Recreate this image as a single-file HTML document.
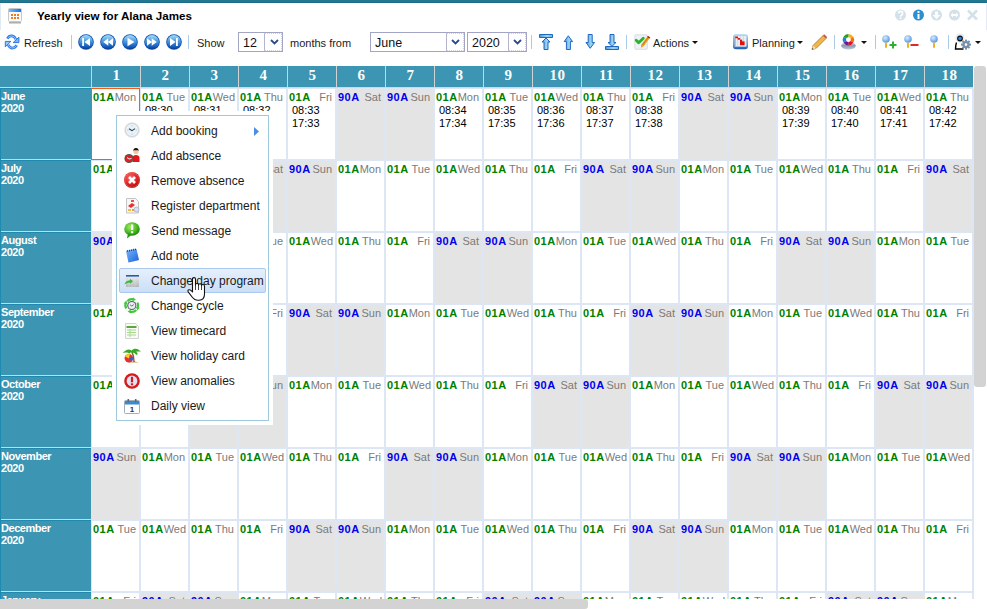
<!DOCTYPE html>
<html><head><meta charset="utf-8">
<style>
*{margin:0;padding:0;box-sizing:border-box}
html,body{width:987px;height:609px;overflow:hidden;background:#fff;font-family:"Liberation Sans",sans-serif;position:relative}
.abs{position:absolute}
#topbar{position:absolute;left:0;top:0;width:987px;height:3px;background:linear-gradient(#237790 0,#237790 2px,#1b6d8a 2px)}
#lline{position:absolute;left:0;top:3px;width:1px;height:27px;background:#dfeaf5}
#rline{position:absolute;left:986px;top:4px;width:1px;height:26px;background:#e4eaf7}
#title{position:absolute;left:37px;top:9px;font-weight:bold;font-size:11.6px;color:#000;white-space:nowrap}
.tb{position:absolute;font-size:11px;color:#1b1b1b;white-space:nowrap;top:36.6px}
.sep{position:absolute;top:35px;width:1px;height:14px;background:#a9cbea}
.sel-box{position:absolute;top:32px;height:20px;border:1px solid #a4a4c4;background:#fff;font-size:12.5px;color:#111}
.sel-box span{position:absolute;left:4px;top:2.5px}
.sel-box .dd{position:absolute;right:0;top:0;bottom:0;border-left:1px solid #b4b4cc;border-top:1px dotted #d0d0e4;border-right:1px dotted #d0d0e4;border-bottom:1px dotted #d0d0e4}
.caret{position:absolute;width:0;height:0;border-left:3px solid transparent;border-right:3px solid transparent;border-top:3.5px solid #111}
svg{position:absolute;overflow:visible}
/* grid */
#hdrrow{position:absolute;left:0;top:66px;width:973px;height:21px;background:#3c95b2}
.h{position:absolute;top:66px;width:49px;height:21px;border-left:1px solid #d2d2d2;color:#fff;font-family:"Liberation Serif",serif;font-weight:bold;font-size:15px;text-align:center;line-height:18px;letter-spacing:0.5px;text-indent:1px}
#hline{position:absolute;left:0;top:87px;width:973px;height:1px;background:#d6d6d6}
#leftcol{position:absolute;left:0;top:88px;width:91px;height:521px;background:#3c95b2;border-left:1px solid #1d8bb0}
.mon{position:absolute;left:1px;width:90px;height:72px;color:#fff;font-weight:bold;font-size:11px;line-height:12px;padding-top:2px;border-top:1px solid #cdd8dc;letter-spacing:-0.45px;box-shadow:inset 0 1px 0 #2089ad}
.c{position:absolute;width:49px;height:72px;border:1px solid #dde6f5;background:#fff;font-size:11px;line-height:13px;padding:2px 2px 0 1px;overflow:hidden}
.c.we{background:#e4e4e4}
.c.sel{border-color:#f75c14}
.l1{display:flex;justify-content:space-between;white-space:nowrap;padding-right:1px}
.c b{font-weight:bold;letter-spacing:0.5px}
.c b.g{color:#008000}
.c b.b{color:#0000f0}
.c i{font-style:normal;color:#7a7a7a}
.c .t{padding-left:3px;color:#000}
#overlay{position:absolute;left:112px;top:111px;width:161px;height:314px;background:#fff}
#menu{position:absolute;left:116px;top:115px;width:153px;height:306px;border:1px solid #9dcbdc;background:#fff}
.mi{position:absolute;left:34px;font-size:12px;color:#1a1a1a;white-space:nowrap}
#hl{position:absolute;left:2px;top:152px;width:147px;height:25px;border:1px solid #abc8ee;border-radius:2px;background:linear-gradient(#e6f0fc,#cadff7)}
#vscroll{position:absolute;left:974px;top:66px;width:12px;height:321px;background:#d3d3d3;border-radius:3px}
#hscroll{position:absolute;left:0;top:599px;width:588px;height:10px;background:#d3d3d3;border-radius:0 3px 3px 0}
#hwhite{position:absolute;left:0;top:599px;width:987px;height:10px;background:#fff}
</style></head><body>
<div id="topbar"></div><div id="lline"></div><div id="rline"></div>
<!-- title icon -->
<svg style="left:8px;top:8px" width="14" height="16" viewBox="0 0 14 16">
 <rect x="0.5" y="0.5" width="13" height="13" rx="1" fill="#fafafa" stroke="#c8c8c8"/>
 <defs><linearGradient id="tcg" x1="0" x2="1"><stop offset="0" stop-color="#6cc0fa"/><stop offset="1" stop-color="#1a6ef0"/></linearGradient></defs><rect x="1" y="1" width="12" height="3" fill="url(#tcg)"/>
 <g fill="#f07a1e"><rect x="3" y="6" width="2" height="2"/><rect x="6" y="6" width="2" height="2"/><rect x="9" y="6" width="2" height="2"/><rect x="3" y="9" width="2" height="2"/><rect x="6" y="9" width="2" height="2"/><rect x="9" y="9" width="2" height="2"/></g>
 <rect x="1" y="14" width="12" height="1.5" fill="#777" opacity=".6"/>
</svg>
<div id="title">Yearly view for Alana James</div>
<!-- window icons -->
<svg style="left:895px;top:9px" width="86" height="12" viewBox="0 0 86 12">
 <circle cx="5.5" cy="6" r="5.5" fill="#d3e1ea"/>
 <path d="M3.6 4.6Q3.6 2.4 5.6 2.4T7.6 4.4Q7.6 5.6 6.5 6.2T5.6 7.6" fill="none" stroke="#fff" stroke-width="1.6"/><rect x="4.8" y="8.4" width="1.7" height="1.6" fill="#fff"/>
 <circle cx="23.5" cy="6" r="5.5" fill="#2b8fd0"/>
 <rect x="22.5" y="5" width="2" height="5" fill="#fff"/><rect x="22.5" y="2" width="2" height="2" fill="#fff"/>
 <circle cx="41.5" cy="6" r="5.5" fill="#d3e1ea"/>
 <path d="M40 2.5h3v3.5h2.3l-3.8 4.2-3.8-4.2h2.3z" fill="#fff"/>
 <circle cx="59.5" cy="6" r="5.5" fill="#d3e1ea"/>
 <path d="M55.5 6l2.5-2.5v1.5h3v-1.5l2.5 2.5-2.5 2.5v-1.5h-3v1.5z" fill="#fff"/>
 <path d="M73 1.5l9 9M82 1.5l-9 9" stroke="#d3e1ea" stroke-width="2.6"/>
</svg>
<!-- toolbar -->
<svg style="left:5px;top:35px" width="14" height="14" viewBox="0 0 14 14">
 <path d="M2.3 3.6Q4 0.6 7 0.9Q9.5 1.2 10.8 4.2" fill="none" stroke="#2a78e0" stroke-width="2.6"/>
 <path d="M2.3 3.6Q4 0.6 7 0.9Q9.5 1.2 10.8 4.2" fill="none" stroke="#9ccaf8" stroke-width=".9"/>
 <path d="M13.9 2.2V7.6H8.2z" fill="#7ab8f4" stroke="#2a78e0" stroke-width="1" stroke-linejoin="round"/>
 <path d="M11.7 10.2Q10 13.3 7 13.1Q4.5 12.8 3.2 9.8" fill="none" stroke="#2a78e0" stroke-width="2.6"/>
 <path d="M11.7 10.2Q10 13.3 7 13.1Q4.5 12.8 3.2 9.8" fill="none" stroke="#9ccaf8" stroke-width=".9"/>
 <path d="M0.3 6.4V11.8L5.9 6.4z" fill="#9ccaf8" stroke="#2a78e0" stroke-width="1" stroke-linejoin="round"/>
</svg>
<div class="tb" style="left:24px">Refresh</div>
<div class="sep" style="left:71px"></div>
<svg style="left:78px;top:34px" width="106" height="16" viewBox="0 0 106 16">
 <defs>
  <linearGradient id="bg1" x1="0" y1="0" x2="0" y2="1"><stop offset="0" stop-color="#a4dcfa"/><stop offset=".45" stop-color="#4a9ae0"/><stop offset=".8" stop-color="#1a62c0"/><stop offset="1" stop-color="#0a3a90"/></linearGradient>
  <g id="nbb"><circle cx="8" cy="8" r="7.8" fill="#0d4aa8"/><circle cx="8" cy="8" r="7" fill="url(#bg1)"/></g>
 </defs>
 <g><use href="#nbb"/><rect x="4.2" y="4" width="1.8" height="8" fill="#fff"/><path d="M12 4v8l-5.5-4z" fill="#fff"/></g>
 <g transform="translate(22,0)"><use href="#nbb"/><path d="M8.3 4.2v7.6l-5-3.8zM13 4.2v7.6l-5-3.8z" fill="#fff"/></g>
 <g transform="translate(44,0)"><use href="#nbb"/><path d="M5.5 3.8v8.4l7-4.2z" fill="#fff"/></g>
 <g transform="translate(66,0)"><use href="#nbb"/><path d="M3 4.2v7.6l5-3.8zM7.7 4.2v7.6l5-3.8z" fill="#fff"/></g>
 <g transform="translate(88,0)"><use href="#nbb"/><path d="M4 4v8l5.5-4z" fill="#fff"/><rect x="10" y="4" width="1.8" height="8" fill="#fff"/></g>
</svg>
<div class="sep" style="left:188px"></div>
<div class="tb" style="left:197px">Show</div>
<div class="sel-box" style="left:238px;width:45px"><span>12</span><div class="dd" style="width:18px"></div></div>
<div class="tb" style="left:290px">months from</div>
<div class="sel-box" style="left:370px;width:95px"><span>June</span><div class="dd" style="width:18px"></div></div>
<div class="sel-box" style="left:467px;width:60px"><span>2020</span><div class="dd" style="width:18px"></div></div>
<svg style="left:270px;top:39px" width="280" height="6" viewBox="0 0 280 6">
 <path d="M1 1l3.5 3.5 3.5-3.5" fill="none" stroke="#2a4a8a" stroke-width="1.8"/>
 <path d="M182 1l3.5 3.5 3.5-3.5" fill="none" stroke="#2a4a8a" stroke-width="1.8"/>
 <path d="M244 1l3.5 3.5 3.5-3.5" fill="none" stroke="#2a4a8a" stroke-width="1.8"/>
</svg>
<div class="sep" style="left:531px"></div>
<svg style="left:538px;top:34px" width="84" height="16" viewBox="0 0 84 16">
 <defs><linearGradient id="ag" x1="0" x2="1"><stop offset="0" stop-color="#4f97d6"/><stop offset=".6" stop-color="#9fd6f2"/><stop offset="1" stop-color="#6cb0e0"/></linearGradient></defs>
 <g fill="url(#ag)" stroke="#1f68c2" stroke-width="1" stroke-linejoin="round">
 <rect x="1.5" y="0.5" width="13" height="3"/><path d="M8 4l4 4h-2v7.5h-4v-7.5h-2z"/>
 <path d="M30.3 1.8l4.3 5.8h-2.2v7.9h-4v-7.9h-2.2z"/>
 <path d="M52.2 14.3l4.3-5.8h-2.3v-8h-4v8h-2.2z"/>
 <path d="M74 12.3l4-3.8h-2v-8h-4v8h-2z"/><rect x="67.5" y="12.5" width="13" height="3"/>
 </g>
</svg>
<div class="sep" style="left:626px"></div>
<svg style="left:634px;top:34px" width="17" height="16" viewBox="0 0 17 16">
 <rect x="0.8" y="0.8" width="12.5" height="14.5" rx="1" fill="#eef2f6" stroke="#d2d6da" stroke-width=".8"/>
 <path d="M2.2 6.3L4.6 8.8 9.3 4.2" fill="none" stroke="#28b428" stroke-width="2.8" stroke-linecap="round" stroke-linejoin="round"/>
 <path d="M6.8 13.8L7.3 10.6 13 3 15.3 4.8 9.6 12.3z" fill="#eea020"/>
 <path d="M8.3 11.2L14 3.8" stroke="#c87010" stroke-width=".8"/>
 <path d="M13 3L14 1.7 16.3 3.5 15.3 4.8z" fill="#b0281a"/>
</svg>
<div class="tb" style="left:653px">Actions</div>
<div class="caret" style="left:692px;top:41px"></div>
<svg style="left:733px;top:34px" width="16" height="16" viewBox="0 0 16 16">
 <defs><linearGradient id="plg" x1="0" y1="0" x2="0" y2="1"><stop offset="0" stop-color="#a8d4f2"/><stop offset=".7" stop-color="#5a9ad8"/><stop offset="1" stop-color="#1a56a8"/></linearGradient></defs>
 <rect x="0" y="0.3" width="15" height="15" rx="3" fill="url(#plg)"/>
 <rect x="1.6" y="1.8" width="11.8" height="10.8" fill="#e9eef3"/>
 <path d="M4.5 2v10.5M7.5 2v10.5M10.5 2v10.5" stroke="#c8d0d8" stroke-width=".7"/>
 <rect x="1.6" y="2" width="1" height="10" fill="#555" opacity=".5"/>
 <g fill="#e01010"><rect x="2.2" y="2.5" width="3" height="1.8" rx=".8"/><rect x="4.6" y="4.1" width="2.6" height="1.6" rx=".7"/><rect x="7" y="5.6" width="2.2" height="5.6"/><rect x="9" y="7.4" width="2.6" height="3.8"/></g>
</svg>
<div class="tb" style="left:752px">Planning</div>
<div class="caret" style="left:797px;top:41px"></div>
<svg style="left:811px;top:34px" width="17" height="16" viewBox="0 0 17 16">
 <path d="M1 15.5l1-4 10-10 3 3-10 10z" fill="#f2b648" stroke="#9a6a2a" stroke-width=".7"/>
 <path d="M12 1.5l3 3 1.2-1.2-3-3z" fill="#d84848"/>
 <path d="M1 15.5l1-4 3 3z" fill="#f5dcb0"/><path d="M1 15.5l.4-1.6 1.2 1.2z" fill="#333"/>
</svg>
<div class="sep" style="left:834px"></div>
<svg style="left:841px;top:34px" width="16" height="16" viewBox="0 0 16 16">
 <defs><linearGradient id="bsg" x1="0" y1="0" x2="0" y2="1"><stop offset="0" stop-color="#dfe6f0"/><stop offset=".5" stop-color="#8a98b0"/><stop offset="1" stop-color="#c4ccd8"/></linearGradient></defs>
 <ellipse cx="7.5" cy="11.7" rx="7.3" ry="3.8" fill="url(#bsg)"/>
 <g transform="translate(7.4 5.7)">
  <path d="M0 0L0-5.7A5.7 5.7 0 0 1 4.9-2.9z" fill="#f8b020"/>
  <path d="M0 0L4.9-2.9A5.7 5.7 0 0 1 4.9 2.9z" fill="#f07010"/>
  <path d="M0 0L4.9 2.9A5.7 5.7 0 0 1 0 5.7z" fill="#e81010"/>
  <path d="M0 0L0 5.7A5.7 5.7 0 0 1-4.9 2.9z" fill="#6a1a9a"/>
  <path d="M0 0L-4.9 2.9A5.7 5.7 0 0 1-4.9-2.9z" fill="#2080e0"/>
  <path d="M0 0L-4.9-2.9A5.7 5.7 0 0 1 0-5.7z" fill="#20a020"/>
  <circle r="2.4" fill="#fff"/>
 </g>
</svg>
<div class="caret" style="left:861px;top:41px"></div>
<div class="sep" style="left:875px"></div>
<svg style="left:882px;top:35px" width="60" height="14" viewBox="0 0 60 14">
 <defs><radialGradient id="pg" cx=".4" cy=".35" r=".7"><stop offset="0" stop-color="#d8ecff"/><stop offset="1" stop-color="#4a90e0"/></radialGradient></defs>
 <circle cx="4" cy="4" r="3.8" fill="url(#pg)"/><rect x="3" y="7.5" width="2" height="5.5" rx="1" fill="#f0b020"/>
 <path d="M10 6.5h2v2.5h2.5v2h-2.5v2.5h-2v-2.5h-2.5v-2h2.5z" fill="#30b030"/>
 <g transform="translate(22,0)"><circle cx="4" cy="4" r="3.8" fill="url(#pg)"/><rect x="3" y="7.5" width="2" height="5.5" rx="1" fill="#f0b020"/><rect x="6.5" y="9" width="8" height="2" fill="#e02828"/></g>
 <g transform="translate(48,0)"><circle cx="4" cy="4" r="3.8" fill="url(#pg)"/><rect x="3" y="7.5" width="2" height="5.5" rx="1" fill="#f0b020"/></g>
</svg>
<div class="sep" style="left:948px"></div>
<svg style="left:955px;top:34px" width="17" height="16" viewBox="0 0 17 16">
 <circle cx="5" cy="4" r="4.6" fill="#e8e8e8"/>
 <circle cx="5" cy="4.5" r="2.9" fill="#111"/><circle cx="5" cy="4.5" r="1.8" fill="#1a8af0"/>
 <path d="M1.5 8.5c-.8 2-1 4.5-1 6.5h8" fill="none" stroke="#000" stroke-width="1.4"/>
 <g transform="translate(11 10.6)" fill="#7890a8">
  <circle r="3.6"/>
  <rect x="-1" y="-5" width="2" height="10"/><rect x="-5" y="-1" width="10" height="2"/>
  <rect x="-1" y="-5" width="2" height="10" transform="rotate(45)"/><rect x="-1" y="-5" width="2" height="10" transform="rotate(-45)"/>
  <circle r="1.3" fill="#fff"/>
 </g>
</svg>
<div class="caret" style="left:975px;top:41px"></div>

<!-- grid -->
<div id="hdrrow"></div>
<div class="h" style="left:91px">1</div><div class="h" style="left:140px">2</div><div class="h" style="left:189px">3</div><div class="h" style="left:238px">4</div><div class="h" style="left:287px">5</div><div class="h" style="left:336px">6</div><div class="h" style="left:385px">7</div><div class="h" style="left:434px">8</div><div class="h" style="left:483px">9</div><div class="h" style="left:532px">10</div><div class="h" style="left:581px">11</div><div class="h" style="left:630px">12</div><div class="h" style="left:679px">13</div><div class="h" style="left:728px">14</div><div class="h" style="left:777px">15</div><div class="h" style="left:826px">16</div><div class="h" style="left:875px">17</div><div class="h" style="left:924px">18</div>
<div id="hline"></div>
<div id="leftcol"></div>
<div class="mon" style="top:87px">June<br>2020</div>
<div class="c sel" style="left:91px;top:88px"><div class="l1"><b class="g">01A</b><i>Mon</i></div></div>
<div class="c" style="left:140px;top:88px"><div class="l1"><b class="g">01A</b><i>Tue</i></div><div class="t">08:30<br>17:30</div></div>
<div class="c" style="left:189px;top:88px"><div class="l1"><b class="g">01A</b><i>Wed</i></div><div class="t">08:31<br>17:31</div></div>
<div class="c" style="left:238px;top:88px"><div class="l1"><b class="g">01A</b><i>Thu</i></div><div class="t">08:32<br>17:32</div></div>
<div class="c" style="left:287px;top:88px"><div class="l1"><b class="g">01A</b><i>Fri</i></div><div class="t">08:33<br>17:33</div></div>
<div class="c we" style="left:336px;top:88px"><div class="l1"><b class="b">90A</b><i>Sat</i></div></div>
<div class="c we" style="left:385px;top:88px"><div class="l1"><b class="b">90A</b><i>Sun</i></div></div>
<div class="c" style="left:434px;top:88px"><div class="l1"><b class="g">01A</b><i>Mon</i></div><div class="t">08:34<br>17:34</div></div>
<div class="c" style="left:483px;top:88px"><div class="l1"><b class="g">01A</b><i>Tue</i></div><div class="t">08:35<br>17:35</div></div>
<div class="c" style="left:532px;top:88px"><div class="l1"><b class="g">01A</b><i>Wed</i></div><div class="t">08:36<br>17:36</div></div>
<div class="c" style="left:581px;top:88px"><div class="l1"><b class="g">01A</b><i>Thu</i></div><div class="t">08:37<br>17:37</div></div>
<div class="c" style="left:630px;top:88px"><div class="l1"><b class="g">01A</b><i>Fri</i></div><div class="t">08:38<br>17:38</div></div>
<div class="c we" style="left:679px;top:88px"><div class="l1"><b class="b">90A</b><i>Sat</i></div></div>
<div class="c we" style="left:728px;top:88px"><div class="l1"><b class="b">90A</b><i>Sun</i></div></div>
<div class="c" style="left:777px;top:88px"><div class="l1"><b class="g">01A</b><i>Mon</i></div><div class="t">08:39<br>17:39</div></div>
<div class="c" style="left:826px;top:88px"><div class="l1"><b class="g">01A</b><i>Tue</i></div><div class="t">08:40<br>17:40</div></div>
<div class="c" style="left:875px;top:88px"><div class="l1"><b class="g">01A</b><i>Wed</i></div><div class="t">08:41<br>17:41</div></div>
<div class="c" style="left:924px;top:88px"><div class="l1"><b class="g">01A</b><i>Thu</i></div><div class="t">08:42<br>17:42</div></div>
<div class="mon" style="top:159px">July<br>2020</div>
<div class="c" style="left:91px;top:160px"><div class="l1"><b class="g">01A</b><i>Wed</i></div></div>
<div class="c" style="left:140px;top:160px"><div class="l1"><b class="g">01A</b><i>Thu</i></div></div>
<div class="c" style="left:189px;top:160px"><div class="l1"><b class="g">01A</b><i>Fri</i></div></div>
<div class="c we" style="left:238px;top:160px"><div class="l1"><b class="b">90A</b><i>Sat</i></div></div>
<div class="c we" style="left:287px;top:160px"><div class="l1"><b class="b">90A</b><i>Sun</i></div></div>
<div class="c" style="left:336px;top:160px"><div class="l1"><b class="g">01A</b><i>Mon</i></div></div>
<div class="c" style="left:385px;top:160px"><div class="l1"><b class="g">01A</b><i>Tue</i></div></div>
<div class="c" style="left:434px;top:160px"><div class="l1"><b class="g">01A</b><i>Wed</i></div></div>
<div class="c" style="left:483px;top:160px"><div class="l1"><b class="g">01A</b><i>Thu</i></div></div>
<div class="c" style="left:532px;top:160px"><div class="l1"><b class="g">01A</b><i>Fri</i></div></div>
<div class="c we" style="left:581px;top:160px"><div class="l1"><b class="b">90A</b><i>Sat</i></div></div>
<div class="c we" style="left:630px;top:160px"><div class="l1"><b class="b">90A</b><i>Sun</i></div></div>
<div class="c" style="left:679px;top:160px"><div class="l1"><b class="g">01A</b><i>Mon</i></div></div>
<div class="c" style="left:728px;top:160px"><div class="l1"><b class="g">01A</b><i>Tue</i></div></div>
<div class="c" style="left:777px;top:160px"><div class="l1"><b class="g">01A</b><i>Wed</i></div></div>
<div class="c" style="left:826px;top:160px"><div class="l1"><b class="g">01A</b><i>Thu</i></div></div>
<div class="c" style="left:875px;top:160px"><div class="l1"><b class="g">01A</b><i>Fri</i></div></div>
<div class="c we" style="left:924px;top:160px"><div class="l1"><b class="b">90A</b><i>Sat</i></div></div>
<div class="mon" style="top:231px">August<br>2020</div>
<div class="c we" style="left:91px;top:232px"><div class="l1"><b class="b">90A</b><i>Sat</i></div></div>
<div class="c we" style="left:140px;top:232px"><div class="l1"><b class="b">90A</b><i>Sun</i></div></div>
<div class="c" style="left:189px;top:232px"><div class="l1"><b class="g">01A</b><i>Mon</i></div></div>
<div class="c" style="left:238px;top:232px"><div class="l1"><b class="g">01A</b><i>Tue</i></div></div>
<div class="c" style="left:287px;top:232px"><div class="l1"><b class="g">01A</b><i>Wed</i></div></div>
<div class="c" style="left:336px;top:232px"><div class="l1"><b class="g">01A</b><i>Thu</i></div></div>
<div class="c" style="left:385px;top:232px"><div class="l1"><b class="g">01A</b><i>Fri</i></div></div>
<div class="c we" style="left:434px;top:232px"><div class="l1"><b class="b">90A</b><i>Sat</i></div></div>
<div class="c we" style="left:483px;top:232px"><div class="l1"><b class="b">90A</b><i>Sun</i></div></div>
<div class="c" style="left:532px;top:232px"><div class="l1"><b class="g">01A</b><i>Mon</i></div></div>
<div class="c" style="left:581px;top:232px"><div class="l1"><b class="g">01A</b><i>Tue</i></div></div>
<div class="c" style="left:630px;top:232px"><div class="l1"><b class="g">01A</b><i>Wed</i></div></div>
<div class="c" style="left:679px;top:232px"><div class="l1"><b class="g">01A</b><i>Thu</i></div></div>
<div class="c" style="left:728px;top:232px"><div class="l1"><b class="g">01A</b><i>Fri</i></div></div>
<div class="c we" style="left:777px;top:232px"><div class="l1"><b class="b">90A</b><i>Sat</i></div></div>
<div class="c we" style="left:826px;top:232px"><div class="l1"><b class="b">90A</b><i>Sun</i></div></div>
<div class="c" style="left:875px;top:232px"><div class="l1"><b class="g">01A</b><i>Mon</i></div></div>
<div class="c" style="left:924px;top:232px"><div class="l1"><b class="g">01A</b><i>Tue</i></div></div>
<div class="mon" style="top:303px">September<br>2020</div>
<div class="c" style="left:91px;top:304px"><div class="l1"><b class="g">01A</b><i>Tue</i></div></div>
<div class="c" style="left:140px;top:304px"><div class="l1"><b class="g">01A</b><i>Wed</i></div></div>
<div class="c" style="left:189px;top:304px"><div class="l1"><b class="g">01A</b><i>Thu</i></div></div>
<div class="c" style="left:238px;top:304px"><div class="l1"><b class="g">01A</b><i>Fri</i></div></div>
<div class="c we" style="left:287px;top:304px"><div class="l1"><b class="b">90A</b><i>Sat</i></div></div>
<div class="c we" style="left:336px;top:304px"><div class="l1"><b class="b">90A</b><i>Sun</i></div></div>
<div class="c" style="left:385px;top:304px"><div class="l1"><b class="g">01A</b><i>Mon</i></div></div>
<div class="c" style="left:434px;top:304px"><div class="l1"><b class="g">01A</b><i>Tue</i></div></div>
<div class="c" style="left:483px;top:304px"><div class="l1"><b class="g">01A</b><i>Wed</i></div></div>
<div class="c" style="left:532px;top:304px"><div class="l1"><b class="g">01A</b><i>Thu</i></div></div>
<div class="c" style="left:581px;top:304px"><div class="l1"><b class="g">01A</b><i>Fri</i></div></div>
<div class="c we" style="left:630px;top:304px"><div class="l1"><b class="b">90A</b><i>Sat</i></div></div>
<div class="c we" style="left:679px;top:304px"><div class="l1"><b class="b">90A</b><i>Sun</i></div></div>
<div class="c" style="left:728px;top:304px"><div class="l1"><b class="g">01A</b><i>Mon</i></div></div>
<div class="c" style="left:777px;top:304px"><div class="l1"><b class="g">01A</b><i>Tue</i></div></div>
<div class="c" style="left:826px;top:304px"><div class="l1"><b class="g">01A</b><i>Wed</i></div></div>
<div class="c" style="left:875px;top:304px"><div class="l1"><b class="g">01A</b><i>Thu</i></div></div>
<div class="c" style="left:924px;top:304px"><div class="l1"><b class="g">01A</b><i>Fri</i></div></div>
<div class="mon" style="top:375px">October<br>2020</div>
<div class="c" style="left:91px;top:376px"><div class="l1"><b class="g">01A</b><i>Thu</i></div></div>
<div class="c" style="left:140px;top:376px"><div class="l1"><b class="g">01A</b><i>Fri</i></div></div>
<div class="c we" style="left:189px;top:376px"><div class="l1"><b class="b">90A</b><i>Sat</i></div></div>
<div class="c we" style="left:238px;top:376px"><div class="l1"><b class="b">90A</b><i>Sun</i></div></div>
<div class="c" style="left:287px;top:376px"><div class="l1"><b class="g">01A</b><i>Mon</i></div></div>
<div class="c" style="left:336px;top:376px"><div class="l1"><b class="g">01A</b><i>Tue</i></div></div>
<div class="c" style="left:385px;top:376px"><div class="l1"><b class="g">01A</b><i>Wed</i></div></div>
<div class="c" style="left:434px;top:376px"><div class="l1"><b class="g">01A</b><i>Thu</i></div></div>
<div class="c" style="left:483px;top:376px"><div class="l1"><b class="g">01A</b><i>Fri</i></div></div>
<div class="c we" style="left:532px;top:376px"><div class="l1"><b class="b">90A</b><i>Sat</i></div></div>
<div class="c we" style="left:581px;top:376px"><div class="l1"><b class="b">90A</b><i>Sun</i></div></div>
<div class="c" style="left:630px;top:376px"><div class="l1"><b class="g">01A</b><i>Mon</i></div></div>
<div class="c" style="left:679px;top:376px"><div class="l1"><b class="g">01A</b><i>Tue</i></div></div>
<div class="c" style="left:728px;top:376px"><div class="l1"><b class="g">01A</b><i>Wed</i></div></div>
<div class="c" style="left:777px;top:376px"><div class="l1"><b class="g">01A</b><i>Thu</i></div></div>
<div class="c" style="left:826px;top:376px"><div class="l1"><b class="g">01A</b><i>Fri</i></div></div>
<div class="c we" style="left:875px;top:376px"><div class="l1"><b class="b">90A</b><i>Sat</i></div></div>
<div class="c we" style="left:924px;top:376px"><div class="l1"><b class="b">90A</b><i>Sun</i></div></div>
<div class="mon" style="top:447px">November<br>2020</div>
<div class="c we" style="left:91px;top:448px"><div class="l1"><b class="b">90A</b><i>Sun</i></div></div>
<div class="c" style="left:140px;top:448px"><div class="l1"><b class="g">01A</b><i>Mon</i></div></div>
<div class="c" style="left:189px;top:448px"><div class="l1"><b class="g">01A</b><i>Tue</i></div></div>
<div class="c" style="left:238px;top:448px"><div class="l1"><b class="g">01A</b><i>Wed</i></div></div>
<div class="c" style="left:287px;top:448px"><div class="l1"><b class="g">01A</b><i>Thu</i></div></div>
<div class="c" style="left:336px;top:448px"><div class="l1"><b class="g">01A</b><i>Fri</i></div></div>
<div class="c we" style="left:385px;top:448px"><div class="l1"><b class="b">90A</b><i>Sat</i></div></div>
<div class="c we" style="left:434px;top:448px"><div class="l1"><b class="b">90A</b><i>Sun</i></div></div>
<div class="c" style="left:483px;top:448px"><div class="l1"><b class="g">01A</b><i>Mon</i></div></div>
<div class="c" style="left:532px;top:448px"><div class="l1"><b class="g">01A</b><i>Tue</i></div></div>
<div class="c" style="left:581px;top:448px"><div class="l1"><b class="g">01A</b><i>Wed</i></div></div>
<div class="c" style="left:630px;top:448px"><div class="l1"><b class="g">01A</b><i>Thu</i></div></div>
<div class="c" style="left:679px;top:448px"><div class="l1"><b class="g">01A</b><i>Fri</i></div></div>
<div class="c we" style="left:728px;top:448px"><div class="l1"><b class="b">90A</b><i>Sat</i></div></div>
<div class="c we" style="left:777px;top:448px"><div class="l1"><b class="b">90A</b><i>Sun</i></div></div>
<div class="c" style="left:826px;top:448px"><div class="l1"><b class="g">01A</b><i>Mon</i></div></div>
<div class="c" style="left:875px;top:448px"><div class="l1"><b class="g">01A</b><i>Tue</i></div></div>
<div class="c" style="left:924px;top:448px"><div class="l1"><b class="g">01A</b><i>Wed</i></div></div>
<div class="mon" style="top:519px">December<br>2020</div>
<div class="c" style="left:91px;top:520px"><div class="l1"><b class="g">01A</b><i>Tue</i></div></div>
<div class="c" style="left:140px;top:520px"><div class="l1"><b class="g">01A</b><i>Wed</i></div></div>
<div class="c" style="left:189px;top:520px"><div class="l1"><b class="g">01A</b><i>Thu</i></div></div>
<div class="c" style="left:238px;top:520px"><div class="l1"><b class="g">01A</b><i>Fri</i></div></div>
<div class="c we" style="left:287px;top:520px"><div class="l1"><b class="b">90A</b><i>Sat</i></div></div>
<div class="c we" style="left:336px;top:520px"><div class="l1"><b class="b">90A</b><i>Sun</i></div></div>
<div class="c" style="left:385px;top:520px"><div class="l1"><b class="g">01A</b><i>Mon</i></div></div>
<div class="c" style="left:434px;top:520px"><div class="l1"><b class="g">01A</b><i>Tue</i></div></div>
<div class="c" style="left:483px;top:520px"><div class="l1"><b class="g">01A</b><i>Wed</i></div></div>
<div class="c" style="left:532px;top:520px"><div class="l1"><b class="g">01A</b><i>Thu</i></div></div>
<div class="c" style="left:581px;top:520px"><div class="l1"><b class="g">01A</b><i>Fri</i></div></div>
<div class="c we" style="left:630px;top:520px"><div class="l1"><b class="b">90A</b><i>Sat</i></div></div>
<div class="c we" style="left:679px;top:520px"><div class="l1"><b class="b">90A</b><i>Sun</i></div></div>
<div class="c" style="left:728px;top:520px"><div class="l1"><b class="g">01A</b><i>Mon</i></div></div>
<div class="c" style="left:777px;top:520px"><div class="l1"><b class="g">01A</b><i>Tue</i></div></div>
<div class="c" style="left:826px;top:520px"><div class="l1"><b class="g">01A</b><i>Wed</i></div></div>
<div class="c" style="left:875px;top:520px"><div class="l1"><b class="g">01A</b><i>Thu</i></div></div>
<div class="c" style="left:924px;top:520px"><div class="l1"><b class="g">01A</b><i>Fri</i></div></div>
<div class="mon" style="top:591px">January<br>2021</div>
<div class="c" style="left:91px;top:592px"><div class="l1"><b class="g">01A</b><i>Fri</i></div></div>
<div class="c we" style="left:140px;top:592px"><div class="l1"><b class="b">90A</b><i>Sat</i></div></div>
<div class="c we" style="left:189px;top:592px"><div class="l1"><b class="b">90A</b><i>Sun</i></div></div>
<div class="c" style="left:238px;top:592px"><div class="l1"><b class="g">01A</b><i>Mon</i></div></div>
<div class="c" style="left:287px;top:592px"><div class="l1"><b class="g">01A</b><i>Tue</i></div></div>
<div class="c" style="left:336px;top:592px"><div class="l1"><b class="g">01A</b><i>Wed</i></div></div>
<div class="c" style="left:385px;top:592px"><div class="l1"><b class="g">01A</b><i>Thu</i></div></div>
<div class="c" style="left:434px;top:592px"><div class="l1"><b class="g">01A</b><i>Fri</i></div></div>
<div class="c we" style="left:483px;top:592px"><div class="l1"><b class="b">90A</b><i>Sat</i></div></div>
<div class="c we" style="left:532px;top:592px"><div class="l1"><b class="b">90A</b><i>Sun</i></div></div>
<div class="c" style="left:581px;top:592px"><div class="l1"><b class="g">01A</b><i>Mon</i></div></div>
<div class="c" style="left:630px;top:592px"><div class="l1"><b class="g">01A</b><i>Tue</i></div></div>
<div class="c" style="left:679px;top:592px"><div class="l1"><b class="g">01A</b><i>Wed</i></div></div>
<div class="c" style="left:728px;top:592px"><div class="l1"><b class="g">01A</b><i>Thu</i></div></div>
<div class="c" style="left:777px;top:592px"><div class="l1"><b class="g">01A</b><i>Fri</i></div></div>
<div class="c we" style="left:826px;top:592px"><div class="l1"><b class="b">90A</b><i>Sat</i></div></div>
<div class="c we" style="left:875px;top:592px"><div class="l1"><b class="b">90A</b><i>Sun</i></div></div>
<div class="c" style="left:924px;top:592px"><div class="l1"><b class="g">01A</b><i>Mon</i></div></div>
<div style="position:absolute;left:973px;top:88px;width:1px;height:511px;background:#dde6f5"></div>
<div id="hwhite"></div>
<div id="hscroll"></div>
<div id="vscroll"></div>

<!-- context menu -->
<div id="overlay"></div>
<div id="menu">
 <div id="hl"></div>
 <div class="mi" style="top:8px">Add booking</div>
 <div class="mi" style="top:33px">Add absence</div>
 <div class="mi" style="top:58px">Remove absence</div>
 <div class="mi" style="top:83px">Register department</div>
 <div class="mi" style="top:108px">Send message</div>
 <div class="mi" style="top:133px">Add note</div>
 <div class="mi" style="top:158px">Change day program</div>
 <div class="mi" style="top:183px">Change cycle</div>
 <div class="mi" style="top:208px">View timecard</div>
 <div class="mi" style="top:233px">View holiday card</div>
 <div class="mi" style="top:258px">View anomalies</div>
 <div class="mi" style="top:283px">Daily view</div>
</div>
<svg style="left:116px;top:115px" width="153" height="306" viewBox="0 0 153 306">
 <defs>
  <radialGradient id="rr" cx=".4" cy=".35" r=".7"><stop offset="0" stop-color="#ff6a6a"/><stop offset=".7" stop-color="#d81818"/><stop offset="1" stop-color="#9a0a0a"/></radialGradient>
  <radialGradient id="gg" cx=".4" cy=".35" r=".7"><stop offset="0" stop-color="#a8ec6a"/><stop offset=".7" stop-color="#38b018"/><stop offset="1" stop-color="#1d7a0a"/></radialGradient>
  <linearGradient id="nb" x1="0" y1="0" x2="1" y2="1"><stop offset="0" stop-color="#7ab8ff"/><stop offset="1" stop-color="#1a62d8"/></linearGradient>
 </defs>
 <!-- 1 clock -->
 <g transform="translate(8,7)">
  <circle cx="8" cy="8" r="7.8" fill="#e4e4e4"/><circle cx="8" cy="8" r="6.3" fill="#fff" stroke="#c8c8c8" stroke-width=".8"/>
  <circle cx="8" cy="8" r="5.3" fill="#e2f3fc"/>
  <path d="M8 3.2v1M8 11.8v1M3.2 8h1M11.8 8h1" stroke="#9ab" stroke-width=".6"/>
  <path d="M5 6.8L8 8.6 11 6.6" fill="none" stroke="#3a3a3a" stroke-width="1.1"/>
 </g>
 <!-- submenu arrow -->
 <path d="M138 12l5 4.5-5 4.5z" fill="#4a8ee0"/>
 <!-- 2 add absence -->
 <g transform="translate(8,32)">
  <path d="M8.5 15v-4c0-2 1.5-3 3.5-3s3.5 1 3.5 3v4z" fill="#e01a1a"/>
  <circle cx="12" cy="4.5" r="2.6" fill="#f5c8a0"/><path d="M9.3 4c0-2 1-3 2.7-3s2.7 1 2.7 3l-.8-.8h-3.8z" fill="#111"/>
  <circle cx="5" cy="11.5" r="4.6" fill="#555"/><circle cx="5" cy="11.5" r="3.6" fill="#e02020"/>
  <path d="M3 10.5l2 1.5 2.5-0.5" stroke="#fff" stroke-width=".9" fill="none"/>
 </g>
 <!-- 3 remove absence -->
 <g transform="translate(8,57)">
  <circle cx="8" cy="8" r="8" fill="url(#rr)"/><circle cx="8" cy="8" r="7.2" fill="none" stroke="#fff" stroke-opacity=".35" stroke-width=".6"/>
  <path d="M5 5l6 6M11 5l-6 6" stroke="#fff" stroke-width="2.6"/>
 </g>
 <!-- 4 register dept -->
 <g transform="translate(10,83)">
  <path d="M.5 .5h9l3 3v11.5h-12z" fill="#f6f6f6" stroke="#c4c4c4"/>
  <path d="M2 8l4-3 3 2-4 3z" fill="#e83030"/><rect x="5" y="2" width="3" height="2" fill="#e85050"/>
  <rect x="2" y="11" width="3" height="2" fill="#f0c040"/><rect x="6" y="11" width="3" height="2" fill="#f0a030"/>
  <circle cx="10.5" cy="11.5" r="2.5" fill="#d8e0f0" stroke="#90a0c0" stroke-width=".6"/>
 </g>
 <!-- 5 send message -->
 <g transform="translate(8,107)">
  <ellipse cx="8" cy="7" rx="7.8" ry="6.8" fill="url(#gg)"/><path d="M4 11l-1 5.5 5-4z" fill="#2a9a12"/>
  <rect x="7" y="2.5" width="2.2" height="5.5" fill="#fff"/><rect x="7" y="9.2" width="2.2" height="2" fill="#fff"/>
 </g>
 <!-- 6 add note -->
 <g transform="translate(9,133)">
  <path d="M1.5 3.5l10-1.5 2 10.5-10 2z" fill="#c8dcf4"/>
  <path d="M1 3l10.5-2 2.5 11-10.5 2.5z" fill="url(#nb)"/>
  <path d="M2 3l9-1.8" stroke="#333" stroke-width="1.6" stroke-dasharray="1 1"/>
 </g>
 <!-- 7 change day program -->
 <g transform="translate(8,159)">
  <defs><linearGradient id="wg" x1="0" y1="0" x2="0" y2="1"><stop offset="0" stop-color="#eef0f2"/><stop offset="1" stop-color="#b4b8bc"/></linearGradient></defs>
  <rect x="2" y="1" width="13" height="12" fill="url(#wg)"/>
  <rect x="2" y="1" width="13" height="1.6" fill="#2a5aa8"/>
  <path d="M5 4v9M8 4v9M11 4v9" stroke="#fff" stroke-opacity=".35" stroke-width=".6"/>
  <path d="M0.5 10.5Q1.5 6.5 6 6.2V4.8L9 7.3 6 9.8V8.4Q3 8.4 0.5 10.5z" fill="#3cb43c"/>
 </g>
 <!-- 8 change cycle -->
 <g transform="translate(8,183)">
  <g fill="none" stroke="#3ec83a" stroke-width="2.2">
   <path d="M3.3 3.2A6.3 6.3 0 0 1 9.5 1.4"/><path d="M13.4 4.5A6.3 6.3 0 0 1 13.6 10.4"/>
   <path d="M12.3 12A6.3 6.3 0 0 1 6 13.6"/><path d="M2.2 10.5A6.3 6.3 0 0 1 2 4.6"/>
  </g>
  <path d="M9 -0.5L12 1.8 8.5 3.2z M15.7 9.5L13.3 12.5 12 9z M6.5 15.5L3.5 13.2 7 11.8z M-0.2 5.5L2.2 2.5 3.5 6z" fill="#3ec83a"/>
  <circle cx="7.8" cy="7.5" r="4.6" fill="#5a5e66"/><circle cx="7.8" cy="7.5" r="3.5" fill="#eceaf4"/>
  <path d="M6 6.8L7.8 8 9.8 6.6" stroke="#555" stroke-width=".8" fill="none"/>
 </g>
 <!-- 9 timecard -->
 <g transform="translate(9,208)">
  <path d="M.5 .5h10l3 3v12h-13z" fill="#f8faf4" stroke="#c8c8c8" stroke-width=".8"/>
  <rect x="1.5" y="3" width="10" height="2" fill="#5aa83a"/>
  <path d="M2 7h9M2 9.5h9M2 12h9M5 6v8" stroke="#a8d890" stroke-width="1"/>
 </g>
 <!-- 10 holiday card -->
 <g transform="translate(8,232)">
  <path d="M4 15.5c2-1.5 8-1.5 11 0z" fill="#c89840"/>
  <path d="M10 15c0-4-.5-7-2-10" stroke="#8a5a2a" stroke-width="1.5" fill="none"/>
  <path d="M8 5c-2-2-4-2-6-0.5 2-.2 3 .3 4 1.5M8 5c1-2.5 4-3 6-1.5-2 0-3.5.3-5 1.5M8 5c2-.5 4 .5 5 2.5" stroke="#38a828" stroke-width="2" fill="none"/>
  <circle cx="4.8" cy="11.2" r="4.2" fill="#e83030"/>
  <path d="M1 9.5a4.2 4.2 0 0 1 5-2.5l-1 4.5z" fill="#f0d020"/>
  <path d="M5 11.5l3.5-2a4.2 4.2 0 0 1-1 5z" fill="#3060d8"/>
 </g>
 <!-- 11 anomalies -->
 <g transform="translate(8,258)">
  <circle cx="8" cy="8" r="7.8" fill="#d41a1a"/><circle cx="8" cy="8" r="5.4" fill="#e4e0f4"/>
  <rect x="6.9" y="3.8" width="2.2" height="5.5" fill="#d41a1a"/><rect x="6.9" y="10.3" width="2.2" height="2" fill="#d41a1a"/>
 </g>
 <!-- 12 daily view -->
 <g transform="translate(8,283)">
  <rect x="0.5" y="2.5" width="15" height="13" rx="1" fill="#fff" stroke="#8a9aa8" stroke-width=".8"/>
  <rect x="1" y="3" width="14" height="3.5" fill="#3a8ad0"/>
  <rect x="3.5" y="1" width="1.6" height="3" fill="#666"/><rect x="10.9" y="1" width="1.6" height="3" fill="#666"/>
  <text x="8" y="14.2" font-size="8" font-weight="bold" fill="#333" text-anchor="middle" font-family="Liberation Sans">1</text>
 </g>
</svg>
<svg style="left:187px;top:277px" width="20" height="25" viewBox="0 0 20 25">
 <path d="M5.5 13V2Q5.5 0.6 7 0.6T8.5 2V8Q8.6 6.3 10 6.3T11.5 8Q11.6 6.8 13 6.8T14.5 8.5Q14.6 7.5 16 7.5T17.5 9.2V17Q17.5 23.2 12 23.2H10.5Q7.5 23.2 5.5 20.5L1.2 14.8Q0.4 13.4 1.8 12.8Q3.2 12.3 5.5 15Z" fill="#fff" stroke="#111" stroke-width="1.1" stroke-linejoin="round"/>
 <path d="M8.5 8v5M11.5 8v5M14.5 8.5v4.5" stroke="#111" stroke-width=".8"/>
</svg>
</body></html>
